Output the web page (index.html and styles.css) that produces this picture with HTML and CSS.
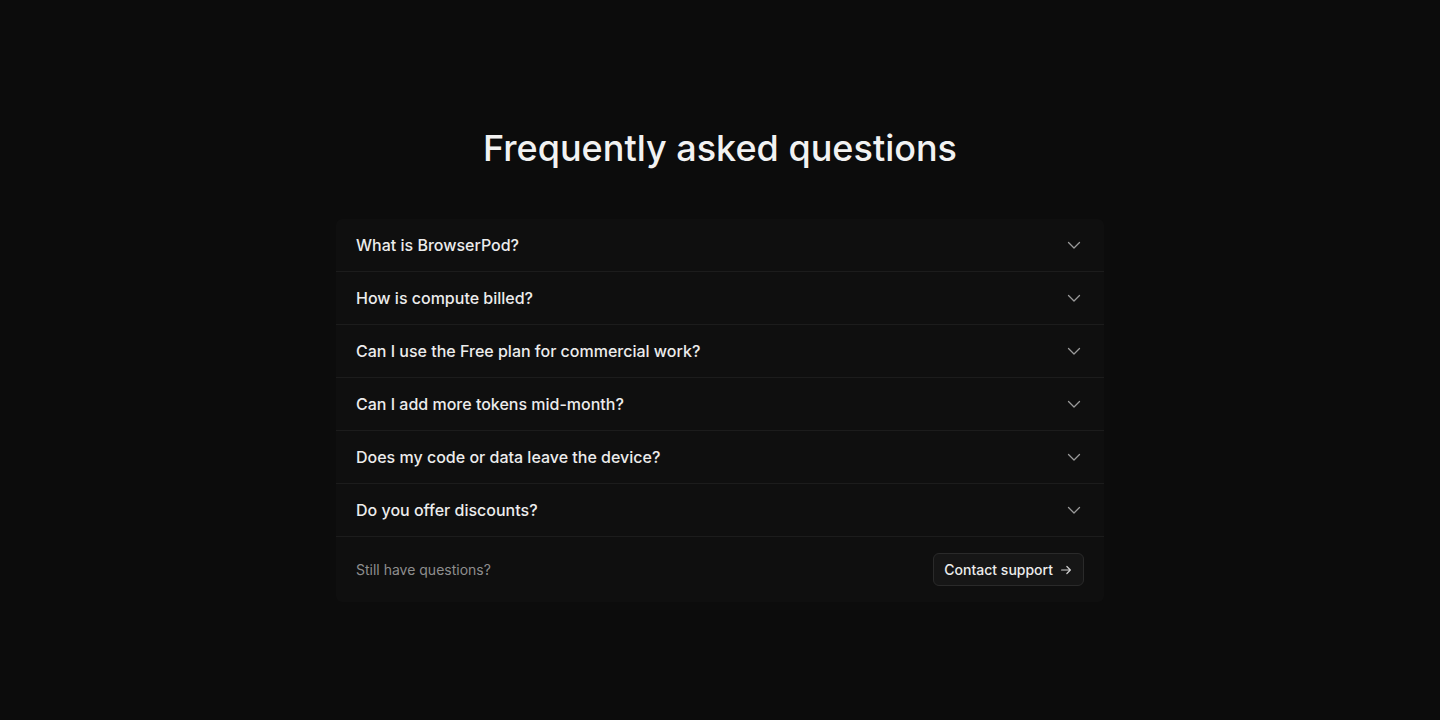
FILE: index.html
```html
<!DOCTYPE html>
<html lang="en">
<head>
  <meta charset="UTF-8" />
  <meta name="viewport" content="width=device-width,initial-scale=1.0" />
  <title>FAQ</title>
  <link rel="stylesheet" href="styles.css">
</head>
<body>
  <section class="faq">
    <h1 class="faq-title">Frequently asked questions</h1>
    <div class="faq-card">
      <button class="faq-item">
        <span>What is BrowserPod?</span>
        <svg class="chev" viewBox="0 0 16 16"><path d="M2.5 5.5l5.5 5.5 5.5-5.5"/></svg>
      </button>
      <button class="faq-item">
        <span>How is compute billed?</span>
        <svg class="chev" viewBox="0 0 16 16"><path d="M2.5 5.5l5.5 5.5 5.5-5.5"/></svg>
      </button>
      <button class="faq-item">
        <span>Can I use the Free plan for commercial work?</span>
        <svg class="chev" viewBox="0 0 16 16"><path d="M2.5 5.5l5.5 5.5 5.5-5.5"/></svg>
      </button>
      <button class="faq-item">
        <span>Can I add more tokens mid-month?</span>
        <svg class="chev" viewBox="0 0 16 16"><path d="M2.5 5.5l5.5 5.5 5.5-5.5"/></svg>
      </button>
      <button class="faq-item">
        <span>Does my code or data leave the device?</span>
        <svg class="chev" viewBox="0 0 16 16"><path d="M2.5 5.5l5.5 5.5 5.5-5.5"/></svg>
      </button>
      <button class="faq-item">
        <span>Do you offer discounts?</span>
        <svg class="chev" viewBox="0 0 16 16"><path d="M2.5 5.5l5.5 5.5 5.5-5.5"/></svg>
      </button>
      <div class="faq-foot">
        <span class="muted">Still have questions?</span>
        <a class="btn-support" href="#">
          Contact support
          <svg class="arrow" viewBox="0 0 16 16"><path d="M3 8h10M9 4l4 4-4 4"/></svg>
        </a>
      </div>
    </div>
  </section>
</body>
</html>
```

FILE: styles.css
```css
* { margin: 0; padding: 0; box-sizing: border-box; }
body {
  min-height: 100vh;
  background: #0c0c0c;
  color: #f2f2f2;
  font-family: Inter, "Noto Sans", sans-serif;
}
.faq {
  width: 768px;
  margin: 0 auto;
  padding-top: 126px;
}
.faq-title {
  font-size: 36px;
  line-height: 44px;
  font-weight: 500;
  text-align: center;
  margin-bottom: 49px;
}
.faq-card {
  background: #0f0f0f;
  border-radius: 6px;
}
.faq-item {
  width: 100%;
  height: 53px;
  display: flex;
  align-items: center;
  justify-content: space-between;
  padding: 0 22px 0 20px;
  background: none;
  border: none;
  border-bottom: 1px solid #1c1c1c;
  color: #ececec;
  font: 500 16px/1 Inter, "Noto Sans", sans-serif;
  text-align: left;
  cursor: pointer;
}
.chev {
  width: 16px;
  height: 16px;
  fill: none;
  stroke: #9a9a9a;
  stroke-width: 1.3;
  stroke-linecap: round;
  stroke-linejoin: round;
}
.faq-foot {
  height: 65px;
  display: flex;
  align-items: center;
  justify-content: space-between;
  padding: 0 20px;
}
.muted {
  color: #8e8e8e;
  font-size: 14px;
}
.btn-support {
  display: flex;
  align-items: center;
  gap: 6px;
  height: 33px;
  padding: 0 10px;
  border: 1px solid #2a2a2a;
  border-radius: 6px;
  background: #161616;
  color: #ececec;
  font-size: 14px;
  font-weight: 450;
  text-decoration: none;
}
.arrow {
  width: 14px;
  height: 14px;
  fill: none;
  stroke: #d0d0d0;
  stroke-width: 1.4;
  stroke-linecap: round;
  stroke-linejoin: round;
}
```
